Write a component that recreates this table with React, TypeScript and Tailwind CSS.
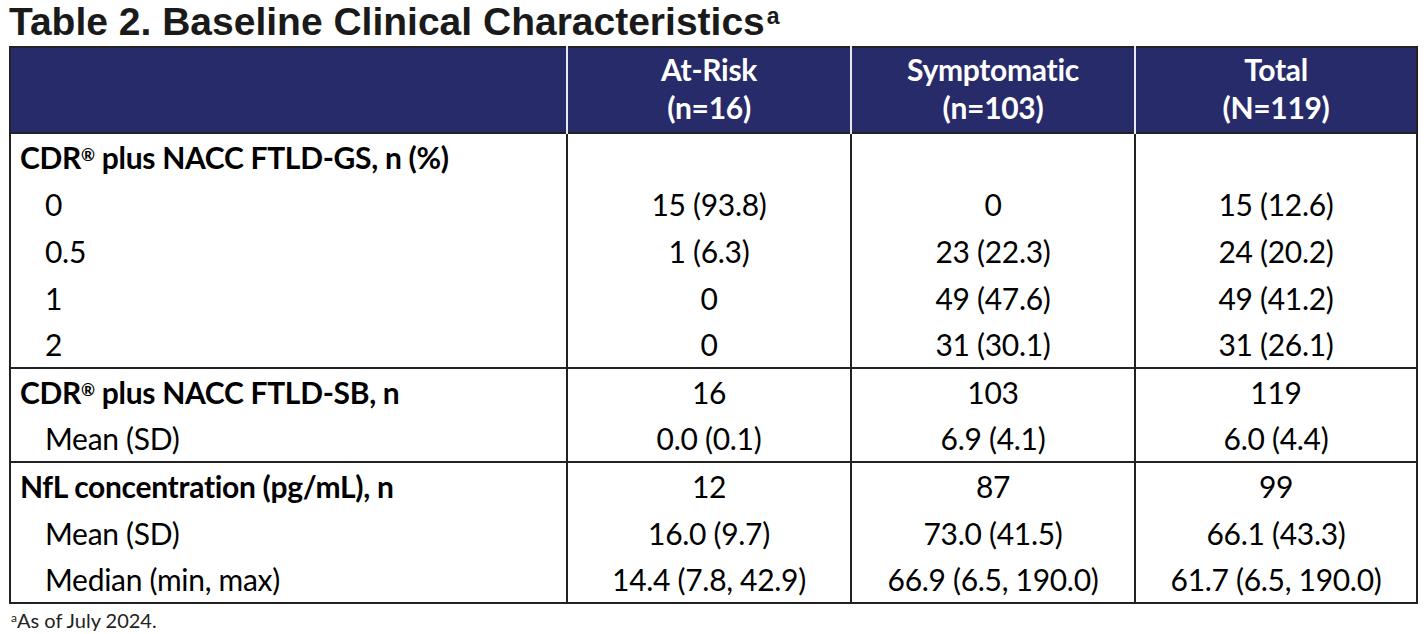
const HEAD = "#282b69";

type Row = { label: string; reg?: boolean; bold?: boolean; cells: string[] };

const GROUPS: Row[][] = [
  [
    { label: "CDR", reg: true, bold: true, cells: ["", "", ""] },
    { label: "0", cells: ["15 (93.8)", "0", "15 (12.6)"] },
    { label: "0.5", cells: ["1 (6.3)", "23 (22.3)", "24 (20.2)"] },
    { label: "1", cells: ["0", "49 (47.6)", "49 (41.2)"] },
    { label: "2", cells: ["0", "31 (30.1)", "31 (26.1)"] },
  ],
  [
    { label: "CDR", reg: true, bold: true, cells: ["16", "103", "119"] },
    { label: "Mean (SD)", cells: ["0.0 (0.1)", "6.9 (4.1)", "6.0 (4.4)"] },
  ],
  [
    { label: "NfL concentration (pg/mL), n", bold: true, cells: ["12", "87", "99"] },
    { label: "Mean (SD)", cells: ["16.0 (9.7)", "73.0 (41.5)", "66.1 (43.3)"] },
    { label: "Median (min, max)", cells: ["14.4 (7.8, 42.9)", "66.9 (6.5, 190.0)", "61.7 (6.5, 190.0)"] },
  ],
];

const CDR_TAIL = [" plus NACC FTLD-GS, n (%)", " plus NACC FTLD-SB, n"];

const COLS = [
  { title: "At-Risk", n: "(n=16)" },
  { title: "Symptomatic", n: "(n=103)" },
  { title: "Total", n: "(N=119)" },
];

export default function App() {
  return (
    <div className="h-[634px] w-[1424px] bg-white pl-[9px] text-black">
      <h1 className="pt-px text-[39px] font-bold leading-[42px] text-[#1a1a1a] [font-family:'Liberation_Sans',Arial,sans-serif]">
        Table 2. Baseline Clinical Characteristics
        <sup className="ml-[2px] text-[23px] font-bold">a</sup>
      </h1>

      <table className="mt-[3px] w-[1409px] table-fixed border-collapse border-2 border-[#222] [font-family:Lato,'Open_Sans',sans-serif]">
        <colgroup>
          <col className="w-[557px]" />
          <col className="w-[284px]" />
          <col className="w-[284px]" />
          <col />
        </colgroup>
        <thead>
          <tr className="h-[86px]" style={{ background: HEAD }}>
            <th className="border-r-2 border-[#e8e8ef]" />
            {COLS.map((c, i) => (
              <th
                key={c.title}
                className={`pb-[4px] text-center text-[30px] font-bold leading-[38px] tracking-[-0.3px] text-white ${
                  i < 2 ? "border-r-2 border-[#e8e8ef]" : ""
                }`}
              >
                <div>{c.title}</div>
                <div>{c.n}</div>
              </th>
            ))}
          </tr>
        </thead>
        {GROUPS.map((g, gi) => (
          <tbody key={gi} className="border-t-2 border-[#222]">
            {g.map((r, ri) => (
              <tr key={ri} className="h-[47px]">
                <td
                  className={`border-r-2 border-[#222] text-[30px] leading-none tracking-[-0.3px] ${
                    r.bold ? "pl-[9px] font-bold" : "pl-[34px]"
                  }`}
                >
                  {r.reg ? (
                    <>
                      CDR<sup className="text-[17px]">®</sup>
                      {CDR_TAIL[gi]}
                    </>
                  ) : (
                    r.label
                  )}
                </td>
                {r.cells.map((c, ci) => (
                  <td
                    key={ci}
                    className={`text-center text-[30px] leading-none tracking-[-0.3px] ${
                      ci < 2 ? "border-r-2 border-[#222]" : ""
                    }`}
                  >
                    {c}
                  </td>
                ))}
              </tr>
            ))}
          </tbody>
        ))}
      </table>

      <p className="mt-[4px] pl-[2px] text-[20px] leading-[24px] text-[#222] [font-family:Lato,'Open_Sans',sans-serif]">
        <sup className="text-[12px]">a</sup>As of July 2024.
      </p>
    </div>
  );
}
